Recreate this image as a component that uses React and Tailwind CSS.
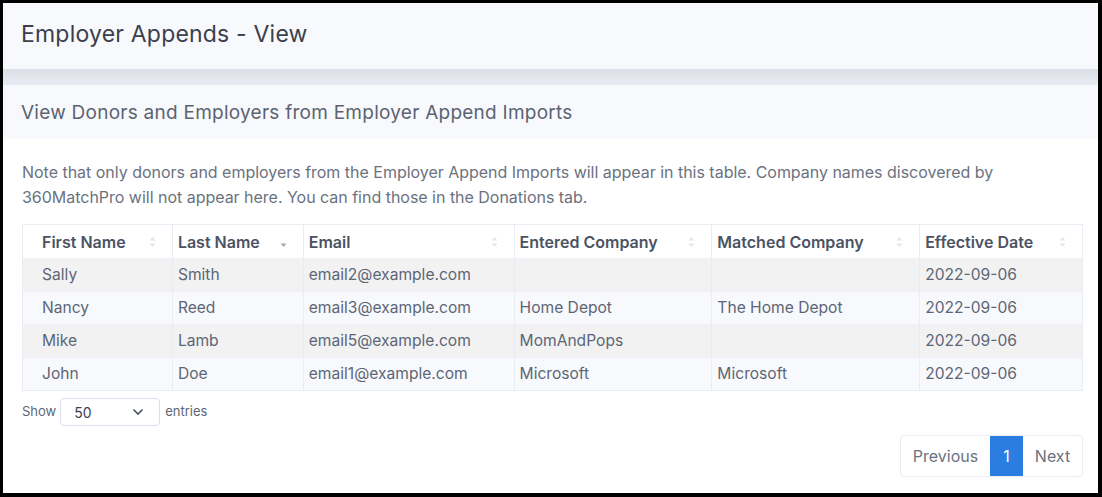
import React from 'react'

const rows = [
  { first: 'Sally', last: 'Smith', email: 'email2@example.com', entered: '', matched: '', date: '2022-09-06' },
  { first: 'Nancy', last: 'Reed', email: 'email3@example.com', entered: 'Home Depot', matched: 'The Home Depot', date: '2022-09-06' },
  { first: 'Mike', last: 'Lamb', email: 'email5@example.com', entered: 'MomAndPops', matched: '', date: '2022-09-06' },
  { first: 'John', last: 'Doe', email: 'email1@example.com', entered: 'Microsoft', matched: 'Microsoft', date: '2022-09-06' }
]

const cols = [
  { label: 'First Name', w: 'w-[149px]', pad: 'pl-[19px]' },
  { label: 'Last Name', w: 'w-[131px]', pad: 'pl-[5px]', sorted: true },
  { label: 'Email', w: 'w-[211px]', pad: 'pl-[5px]' },
  { label: 'Entered Company', w: 'w-[198px]', pad: 'pl-[5px]' },
  { label: 'Matched Company', w: 'w-[208px]', pad: 'pl-[5px]' },
  { label: 'Effective Date', w: 'w-[163px]', pad: 'pl-[5px]' }
]

function SortIcon({ sorted }) {
  return (
    <svg width="7" height="12" viewBox="0 0 7 12" className="shrink-0">
      {!sorted && <path d="M3.5 1 L6.5 4.5 L0.5 4.5 Z" fill="#e3e6ec" />}
      <path d="M3.5 11 L6.5 7.5 L0.5 7.5 Z" fill={sorted ? '#a3a9b5' : '#e3e6ec'} />
    </svg>
  )
}

export default function App() {
  return (
    <div className="w-[1102px] h-[497px] bg-black pt-[3px] pl-[3px] pr-[4px] pb-[4px] font-['Inter',sans-serif]">
      <div className="h-full bg-white flex flex-col">
        <div className="h-[66px] bg-[#f8f9fc] flex items-center pl-[18px] shrink-0">
          <h1 className="text-[23px] tracking-[0.2px] text-[#3b404c] leading-none -mt-[4px]">Employer Appends - View</h1>
        </div>
        <div className="h-[16px] shrink-0 bg-gradient-to-b from-[#dcdfe5] to-[#e8ebf1]"></div>
        <div className="h-[54px] bg-[#f8f9fc] flex items-center pl-[18px] shrink-0">
          <h2 className="text-[19px] tracking-[0.25px] text-[#5b6371] leading-none">View Donors and Employers from Employer Append Imports</h2>
        </div>
        <div className="px-[19px] pt-[21px]">
          <p className="text-[16px] leading-[25px] text-[#6b7280] tracking-[-0.02px]">
            Note that only donors and employers from the Employer Append Imports will appear in this table. Company names discovered by 360MatchPro will not appear here. You can find those in the Donations tab.
          </p>
          <div className="mt-[14px] border border-[#e9ecf3] w-[1061px]">
            <div className="flex h-[33px] bg-white">
              {cols.map((c, i) => (
                <div
                  key={c.label}
                  className={`${c.w} ${c.pad} pr-[16px] flex items-center justify-between text-[16px] font-semibold text-[#4b5363] ${i > 0 ? 'border-l border-[#e9ecf3]' : ''}`}
                >
                  <span>{c.label}</span>
                  <SortIcon sorted={c.sorted} />
                </div>
              ))}
            </div>
            {rows.map((r, ri) => {
              const vals = [r.first, r.last, r.email, r.entered, r.matched, r.date]
              return (
                <div key={ri} className={`flex h-[33px] border-t border-[#eef0f5] ${ri % 2 === 0 ? 'bg-[#f2f2f2]' : 'bg-[#f8f9fc]'}`}>
                  {vals.map((v, i) => (
                    <div
                      key={i}
                      className={`${cols[i].w} ${cols[i].pad} flex items-center text-[15.6px] text-[#5d6677] ${i > 0 ? 'border-l border-[#e9ecf3]' : ''}`}
                    >
                      {v}
                    </div>
                  ))}
                </div>
              )
            })}
          </div>
          <div className="flex items-center mt-[7px] text-[13px] text-[#5d6677]">
            <span>Show</span>
            <div className="ml-[4px] w-[100px] h-[28px] border border-[#d9e0ec] rounded-[4px] flex items-center justify-between pl-[13px] pr-[15px] text-[14px] text-[#3b404c]">
              <span>50</span>
              <svg width="12" height="8" viewBox="0 0 12 8">
                <path d="M1.5 1.5 L6 6 L10.5 1.5" fill="none" stroke="#4b5363" strokeWidth="1.6" />
              </svg>
            </div>
            <span className="ml-[5px]">entries</span>
          </div>
          <div className="flex justify-end mt-[9px] w-[1061px]">
            <div className="flex h-[42px] border border-[#e9ecf3] rounded-[4px] text-[16px]">
              <div className="w-[89px] flex items-center justify-center text-[#6b7280]">Previous</div>
              <div className="w-[33px] flex items-center justify-center bg-[#2b7de1] text-white">1</div>
              <div className="w-[59px] flex items-center justify-center text-[#6b7280]">Next</div>
            </div>
          </div>
        </div>
      </div>
    </div>
  )
}
